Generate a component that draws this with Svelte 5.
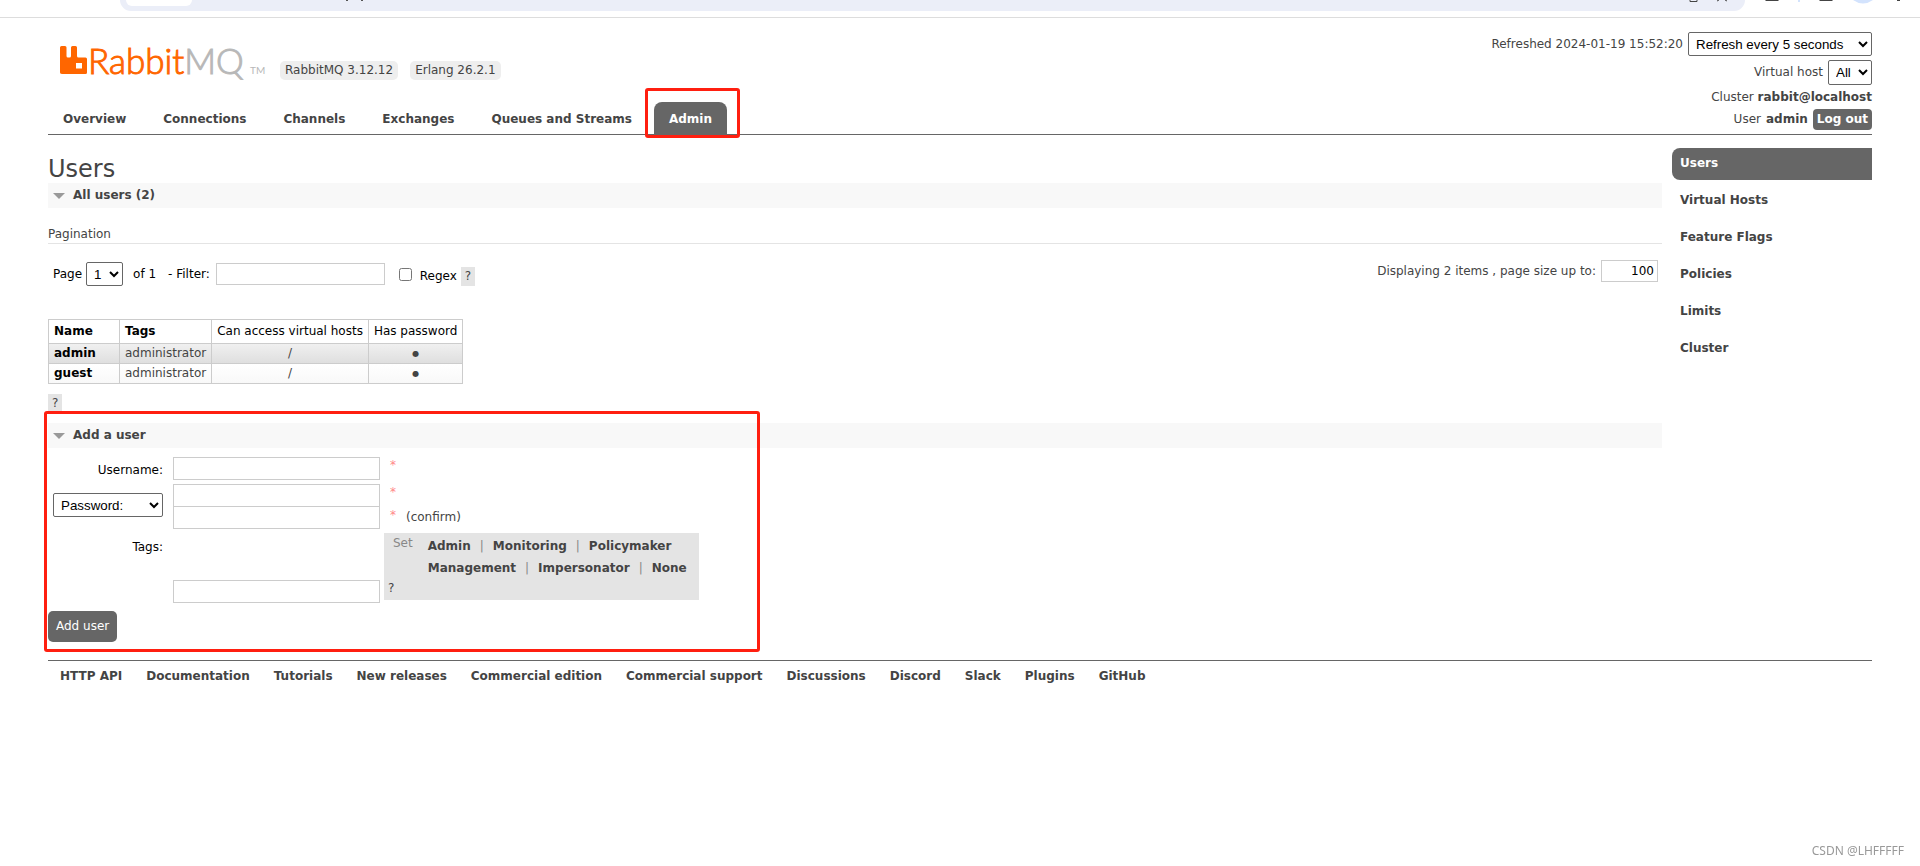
<script>
	const tabs = ['Overview', 'Connections', 'Channels', 'Exchanges', 'Queues and Streams', 'Admin']
	const sections = ['Users', 'Virtual Hosts', 'Feature Flags', 'Policies', 'Limits', 'Cluster']
	const links = [
		'HTTP API', 'Documentation', 'Tutorials', 'New releases', 'Commercial edition', 'Commercial support',
		'Discussions', 'Discord', 'Slack', 'Plugins', 'GitHub',
	]
	const tagRows = [
		['Admin', 'Monitoring', 'Policymaker'],
		['Management', 'Impersonator', 'None'],
	]
	const users = [
		{ name: 'admin', tags: 'administrator', vhosts: '/' },
		{ name: 'guest', tags: 'administrator', vhosts: '/' },
	]

	let activeTab = $state('Admin')
	let activeSection = $state('Users')
	let showUsers = $state(true)
	let showAdd = $state(true)
	let filter = $state('')
	let regex = $state(false)
	let pageSize = $state('100')
	let tags = $state('')

	const addTag = tag => {
		const value = tag === 'Admin' ? 'administrator' : tag.toLowerCase()
		if (tag === 'None') tags = ''
		else tags = tags ? `${tags}, ${value}` : value
	}
</script>

<div class="browser">
	<div class="address">
		<span class="site"></span>
		<svg class="url" width="24" height="2" viewBox="0 0 24 2"><path d="M1 0v1M16 0v1" stroke="#555" stroke-width="2" /></svg>
		<svg class="star" width="44" height="3" viewBox="0 0 44 3"><path d="M1 0v1.5h7V0M30 0l-2 1M36 0l2 1" fill="none" stroke="#444" /></svg>
	</div>
	<svg class="tools" width="150" height="4" viewBox="0 0 150 4">
		<path d="M1 0h14l-1 1H2zM55 0h14l-1 1H56z" fill="#444" />
		<path d="M34 0h2v2h-2z" fill="#d3e3fd" />
		<path d="M89 0h20q-10 7-20 0z" fill="#d3e3fd" />
		<path d="M133 0h3v1h-3z" fill="#444" />
	</svg>
</div>

<div class="page">
	<header>
		<div class="brand">
			<a class="logo" href="#top" aria-label="RabbitMQ">
				<svg width="208" height="50" viewBox="0 -10 208 50">
					<path d="M1.500 2h3.500q1.500 0 1.500 1.500V12q0 1.500 1.500 1.500h1.500q1.500 0 1.500-1.500V3.500q0-1.500 1.500-1.500h3q1.500 0 1.500 1.500V12q0 1.500 1.500 1.500h7q1.500 0 1.500 1.500v13.500q0 1.500-1.500 1.500h-23Q0 30 0 28.500v-25Q0 2 1.500 2zM16 19v5.500h6V19z" fill="#f60" fill-rule="evenodd" />
					<text x="28" y="30" class="word" fill="#f60" stroke="#f60">Rabbit<tspan fill="#b8b8b8" stroke="#b8b8b8">MQ</tspan></text>
					<text x="190" y="30" class="tm" fill="#b8b8b8">TM</text>
				</svg>
			</a>
			<span class="version">RabbitMQ 3.12.12</span>
			<span class="version">Erlang 26.2.1</span>
		</div>
		<nav class="tabs">
			{#each tabs as tab}
				<div class="tab">
					<a href="#{tab}" class:selected={activeTab === tab} onclick={() => (activeTab = tab)}>{tab}</a>
					{#if tab === 'Admin'}<div class="mark mark-tab"></div>{/if}
				</div>
			{/each}
		</nav>
		<div class="status">
			<div class="refresh">
				<label for="refresh">Refreshed 2024-01-19 15:52:20</label>
				<select id="refresh">
					<option>Refresh every 5 seconds</option>
					<option>Refresh every 30 seconds</option>
					<option>Do not refresh</option>
				</select>
			</div>
			<div class="vhost">
				<label for="vhost">Virtual host</label>
				<select id="vhost"><option>All</option><option>/</option></select>
			</div>
			<div class="cluster">Cluster <b>rabbit@localhost</b></div>
			<div class="user">User <b>admin</b> <button class="logout">Log out</button></div>
		</div>
	</header>

	<div class="columns">
		<main>
			<h1>Users</h1>
			<section>
				<h2><button onclick={() => (showUsers = !showUsers)}><i class:closed={!showUsers}></i>All users (2)</button></h2>
				{#if showUsers}
					<h3>Pagination</h3>
					<div class="pagination">
						<div class="controls">
							<label for="page">Page</label>
							<select id="page"><option>1</option></select>
							<span class="total">of 1</span>
							<label for="filter">- Filter:</label>
							<input id="filter" type="text" bind:value={filter}>
							<input id="regex" type="checkbox" bind:checked={regex}>
							<label class="regex" for="regex">Regex</label>
							<button class="help">?</button>
						</div>
						<div class="size">
							<label for="size">Displaying 2 items , page size up to:</label>
							<input id="size" type="text" bind:value={pageSize}>
						</div>
					</div>
					<table class="list">
						<thead>
							<tr><th><b>Name</b></th><th><b>Tags</b></th><th>Can access virtual hosts</th><th>Has password</th></tr>
						</thead>
						<tbody>
							{#each users as user}
								<tr>
									<td><a href="#{user.name}">{user.name}</a></td>
									<td>{user.tags}</td>
									<td class="c">{user.vhosts}</td>
									<td class="c dot">●</td>
								</tr>
							{/each}
						</tbody>
					</table>
					<button class="help">?</button>
				{/if}
			</section>

			<section class="add">
				<h2><button onclick={() => (showAdd = !showAdd)}><i class:closed={!showAdd}></i>Add a user</button></h2>
				{#if showAdd}
					<form onsubmit={e => e.preventDefault()}>
						<div class="row">
							<label class="name" for="username">Username:</label>
							<input id="username" type="text">
							<span class="mand">*</span>
						</div>
						<div class="row">
							<div class="name">
								<select class="kind" aria-label="Password type">
									<option>Password:</option>
									<option>Hashed password:</option>
									<option>No password</option>
								</select>
							</div>
							<div class="passwords">
								<div class="field"><input type="password" aria-label="Password"><span class="mand">*</span></div>
								<div class="field"><input type="password" aria-label="Confirm password"><span class="mand">*</span><span class="confirm">(confirm)</span></div>
							</div>
						</div>
						<div class="row tags">
							<label class="name" for="tags">Tags:</label>
							<input id="tags" type="text" bind:value={tags}>
							<div class="presets">
								<div class="set">
									<span>Set</span>
									<div>
										{#each tagRows as row}
											<div class="line">
												{#each row as tag, i}
													{#if i}<span class="bar">|</span>{/if}
													<button type="button" onclick={() => addTag(tag)}>{tag}</button>
												{/each}
											</div>
										{/each}
									</div>
								</div>
								<button type="button" class="help">?</button>
							</div>
						</div>
						<button class="submit">Add user</button>
					</form>
				{/if}
				<div class="mark mark-form"></div>
			</section>
		</main>

		<aside>
			{#each sections as section}
				<a href="#{section}" class:selected={activeSection === section} onclick={() => (activeSection = section)}>{section}</a>
			{/each}
		</aside>
	</div>

	<footer>
		{#each links as link}
			<a href="#{link}">{link}</a>
		{/each}
	</footer>
</div>

<div class="credit">CSDN @LHFFFFF</div>

<style>
	:global(body) {
		background: #fff;
		color: #444;
		font: 12px/17px Verdana, "DejaVu Sans", sans-serif;
	}

	a {
		color: #444;
		font-weight: bold;
		text-decoration: none;
	}

	button {
		border: 0;
		padding: 0;
		background: none;
		color: #444;
		font: inherit;
		cursor: pointer;
	}

	select {
		box-sizing: border-box;
		height: 24px;
		margin: 0;
		padding: 0 3px;
		border: 1px solid #666;
		border-radius: 2px;
		background: #fff;
		color: #000;
		font-family: Arial, "Liberation Sans", sans-serif;
	}

	input[type="text"], input[type="password"] {
		box-sizing: border-box;
		width: 207px;
		height: 23px;
		margin: 0;
		padding: 3px;
		border: 1px solid #ccc;
		font: inherit;
	}

	.browser {
		display: flex;
		box-sizing: border-box;
		height: 18px;
		padding-left: 120px;
		border-bottom: 1px solid #ddd;
	}

	.address {
		display: flex;
		align-items: flex-start;
		flex: 1;
		height: 11px;
		padding-left: 6px;
		border-radius: 0 0 16px 16px;
		background: #ebeef8;
	}

	.site {
		width: 66px;
		height: 6px;
		border-radius: 0 0 8px 8px;
		background: #fff;
	}

	.url {
		margin-left: 154px;
	}

	.star {
		margin-left: auto;
		margin-right: 12px;
	}

	.tools {
		margin-left: 19px;
		margin-right: 6px;
	}

	.page {
		padding: 0 48px;
	}

	header {
		display: grid;
		grid-template-columns: 1fr auto;
		grid-template-rows: 84px 32px;
		border-bottom: 1px solid #666;
	}

	.brand {
		display: flex;
		align-items: flex-start;
		gap: 12px;
		padding: 16px 0 0 12px;
	}

	.logo svg {
		display: block;
	}

	.word {
		font: 300 35px Lato, sans-serif;
		stroke-width: 1px;
	}

	.tm {
		font: 10px Lato, sans-serif;
	}

	.version {
		margin-top: 27px;
		padding: 1px 5px;
		border-radius: 5px;
		background: #eee;
	}

	.tabs {
		display: flex;
		gap: 7px;
	}

	.tab {
		position: relative;
	}

	.tab a {
		display: block;
		box-sizing: border-box;
		height: 32px;
		padding: 9px 15px 6px;
		border-radius: 8px 8px 0 0;
	}

	.tab a.selected {
		background: #666;
		color: #fff;
	}

	.mark {
		position: absolute;
		border: 3px solid #ff1f10;
		border-radius: 3px;
		pointer-events: none;
	}

	.mark-tab {
		inset: -14px -13px -4px -9px;
	}

	.status {
		grid-area: 1 / 2 / 3 / 3;
		display: flex;
		flex-direction: column;
		gap: 4px;
		align-items: flex-end;
		padding-top: 14px;
	}

	.refresh, .vhost, .user {
		display: flex;
		align-items: center;
		gap: 5px;
	}

	.refresh select {
		width: 184px;
	}

	.vhost select {
		width: 44px;
		height: 25px;
	}

	.cluster {
		line-height: 16px;
	}

	.logout {
		height: 21px;
		padding: 0 4px;
		border-radius: 4px;
		background: #666;
		color: #fff;
		font-weight: bold;
	}

	.columns {
		display: flex;
		align-items: flex-start;
		gap: 10px;
		padding-top: 13px;
	}

	main {
		flex: 1;
	}

	aside {
		display: flex;
		flex-direction: column;
		gap: 5px;
		width: 200px;
	}

	aside a {
		padding: 7px 8px 8px;
		border-radius: 8px 0 0 8px;
	}

	aside a.selected {
		background: #666;
		color: #fff;
	}

	h1 {
		margin: 0;
		padding-top: 7px;
		font-size: 24px;
		font-weight: normal;
		line-height: 28px;
	}

	h2 {
		margin: 0;
		background: #f8f8f8;
		font-size: 12px;
	}

	h2 button {
		display: flex;
		align-items: center;
		gap: 8px;
		width: 100%;
		height: 25px;
		padding-left: 5px;
		font-weight: bold;
	}

	h2 i {
		border: solid transparent;
		border-width: 6px 6px 0;
		border-top-color: #999;
	}

	h2 i.closed {
		transform: rotate(-90deg);
	}

	h3 {
		margin: 17px 0 0;
		border-bottom: 1px solid #e4e4e4;
		font-size: 12px;
		font-weight: normal;
		line-height: 18px;
	}

	.pagination {
		display: flex;
		justify-content: space-between;
		padding: 16px 4px 31px 5px;
	}

	.controls {
		display: flex;
		align-items: center;
		height: 28px;
		color: #000;
	}

	.controls select {
		width: 37px;
		margin: 0 10px 0 4px;
	}

	.total {
		margin-right: 12px;
	}

	#filter {
		width: 169px;
		height: 22px;
		margin: 0 14px 0 6px;
	}

	#regex {
		width: 13px;
		height: 13px;
		margin: 0 8px 0 0;
	}

	.regex {
		padding-top: 4px;
	}

	.help {
		height: 19px;
		padding: 0 4px;
		background: #e4e4e4;
	}

	.controls .help {
		margin-top: 4px;
		margin-left: 4px;
	}

	.size {
		display: flex;
		align-items: center;
		gap: 5px;
		height: 22px;
	}

	#size {
		width: 57px;
		height: 22px;
		text-align: right;
	}

	.list {
		margin-bottom: 10px;
		border-collapse: collapse;
	}

	.list th, .list td {
		padding: 1px 5px;
		border: 1px solid #ccc;
		text-align: left;
	}

	.list th {
		height: 21px;
		color: #000;
		font-weight: normal;
	}

	.list th:first-child {
		width: 60px;
	}

	.list td a {
		color: #000;
	}

	.list .c {
		text-align: center;
	}

	.list .dot {
		font-size: 8px;
	}

	tbody tr {
		background: linear-gradient(#fff, #f8f8f8);
	}

	tbody tr:nth-child(odd) {
		background: linear-gradient(#f0f0f0, #dedede);
	}

	.add {
		position: relative;
		margin-top: 10px;
	}

	.mark-form {
		top: -12px;
		left: -4px;
		bottom: -10px;
		width: 710px;
	}

	form {
		display: flex;
		flex-direction: column;
		gap: 4px;
		padding-top: 9px;
	}

	.row, .field {
		display: flex;
	}

	.name {
		width: 115px;
		margin-right: 10px;
		padding-top: 5px;
		color: #000;
		text-align: right;
	}

	.kind {
		width: 110px;
		margin-top: 4px;
	}

	.mand {
		margin-left: 10px;
		color: #f88;
	}

	.field + .field input {
		margin-top: -1px;
	}

	.confirm {
		margin-left: 10px;
		padding-top: 2px;
	}

	.tags {
		align-items: flex-end;
	}

	.tags .name {
		align-self: flex-start;
		padding-top: 6px;
	}

	.presets {
		align-self: flex-start;
		box-sizing: border-box;
		height: 67px;
		margin-bottom: 3px;
		margin-left: 4px;
		padding: 2px 12px 0 0;
		background: #e4e4e4;
	}

	.set {
		display: flex;
		gap: 15px;
		padding-left: 9px;
		color: #888;
	}

	.line {
		display: flex;
		gap: 9px;
		line-height: 22px;
	}

	.line button {
		font-weight: bold;
	}

	.submit {
		align-self: flex-start;
		height: 31px;
		margin-top: 4px;
		padding: 0 8px;
		border-radius: 5px;
		background: #666;
		color: #fff;
	}

	footer {
		display: flex;
		flex-wrap: wrap;
		gap: 24px;
		margin-top: 18px;
		padding: 7px 12px;
		border-top: 1px solid #666;
	}

	.credit {
		position: fixed;
		right: 16px;
		bottom: 7px;
		color: #999;
		font: 12px/17px "Noto Sans", sans-serif;
	}
</style>
